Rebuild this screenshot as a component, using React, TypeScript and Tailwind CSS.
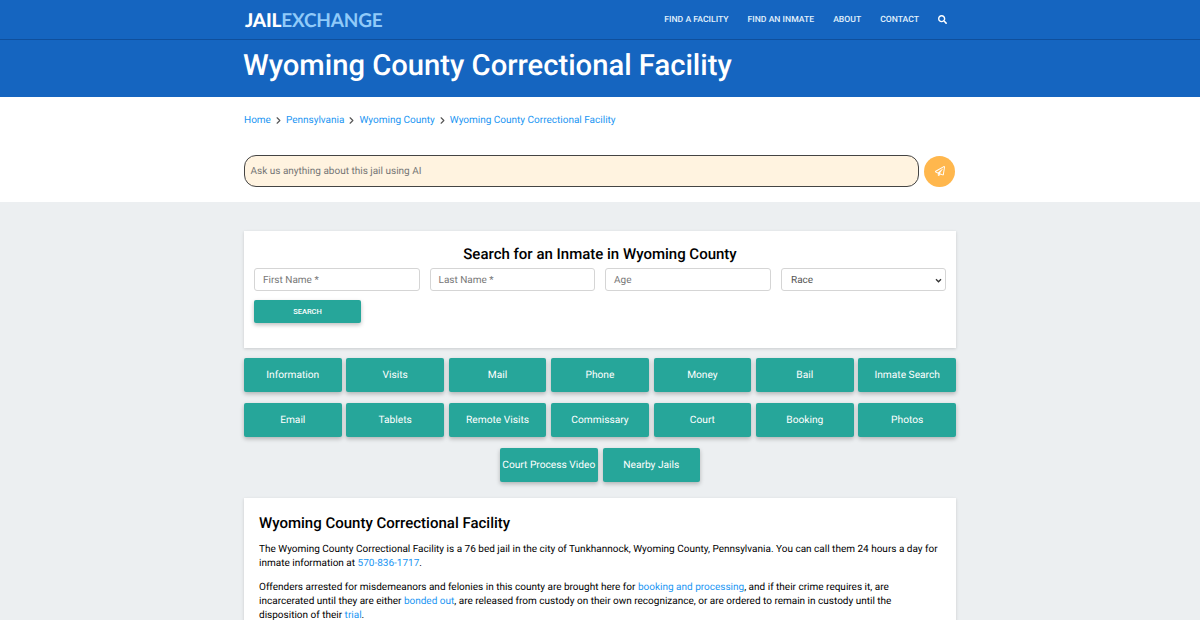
import React from 'react';
import { ChevronRight } from 'lucide-react';
import { FaSearch, FaRegPaperPlane } from 'react-icons/fa';

const navLinks = ['FIND A FACILITY', 'FIND AN INMATE', 'ABOUT', 'CONTACT'];
const crumbs = ['Home', 'Pennsylvania', 'Wyoming County', 'Wyoming County Correctional Facility'];
const rows = [
  ['Information', 'Visits', 'Mail', 'Phone', 'Money', 'Bail', 'Inmate Search'],
  ['Email', 'Tablets', 'Remote Visits', 'Commissary', 'Court', 'Booking', 'Photos'],
];

const TealButton = ({ label }: { label: string }) => (
  <a className="flex h-[34px] w-[97.5px] shrink-0 items-center justify-center whitespace-nowrap rounded-[2px] bg-[#26a69a] pt-px text-[10.2px] text-white shadow-[0_2px_4px_rgba(0,0,0,0.25)]">
    {label}
  </a>
);

const Field = ({ placeholder }: { placeholder: string }) => (
  <div className="flex h-[23px] w-[165.5px] items-center rounded-[3px] border border-[#d5d5d5] bg-white px-2 pt-px text-[10px] text-[#777]">
    {placeholder}
  </div>
);

export default function App() {
  return (
    <div className="h-screen w-full overflow-hidden bg-[#eceff1] font-['Roboto',sans-serif] [text-rendering:geometricPrecision]">
      {/* Header */}
      <header className="h-[97px] bg-[#1565c0] shadow-[0_1px_2px_rgba(0,0,0,0.2)]">
        <div className="h-[40px] border-b border-[#0f4f9c]">
          <div className="mx-auto flex h-full w-[712px] items-center justify-between">
            <a className="ml-px pt-[2px] font-['Lato',sans-serif] text-[19px] font-bold leading-none tracking-[-0.2px]">
              <span className="font-black text-white">JAIL</span>
              <span className="text-[#90caf9]">EXCHANGE</span>
            </a>
            <nav className="mr-[9px] flex items-center gap-[19px] pt-[1px] text-[8.65px] font-medium text-[#e3f2fd]">
              {navLinks.map((l) => (
                <a key={l}>{l}</a>
              ))}
              <FaSearch size={9} className="text-white" />
            </nav>
          </div>
        </div>
        <h1 className="mx-auto -translate-x-px w-[712px] pt-[8px] text-[29.2px] font-medium leading-[36px] text-white">
          Wyoming County Correctional Facility
        </h1>
      </header>

      {/* Breadcrumbs and AI box */}
      <section className="h-[105px] bg-white">
        <div className="mx-auto w-[712px]">
          <div className="flex h-[45px] items-center pt-px text-[10px] text-[#2196f3]">
            {crumbs.map((c, i) => (
              <React.Fragment key={c}>
                {i > 0 && <ChevronRight size={11} strokeWidth={2.5} className="mx-[2px] text-[#555]" />}
                <a>{c}</a>
              </React.Fragment>
            ))}
          </div>
          <div className="mt-[13px] flex items-center justify-between">
            <div className="flex h-[32px] w-[675px] items-center rounded-[12px] border border-[#444] bg-[#fff3e0] px-[5.5px] text-[10px] text-[#757575]">
              Ask us anything about this jail using AI
            </div>
            <button className="mr-px flex h-[31px] w-[31px] items-center justify-center rounded-full bg-[#ffb74d]">
              <FaRegPaperPlane size={10} className="text-white" />
            </button>
          </div>
        </div>
      </section>

      <main className="mx-auto w-[712px] pt-[29px]">
        {/* Inmate search */}
        <section className="h-[117px] bg-white px-[10px] pt-[14px] shadow-[0_1px_3px_rgba(0,0,0,0.15)]">
          <h2 className="text-center text-[15px] font-medium leading-[18px] text-black">
            Search for an Inmate in Wyoming County
          </h2>
          <div className="mt-[5px] flex justify-between">
            <Field placeholder="First Name *" />
            <Field placeholder="Last Name *" />
            <Field placeholder="Age" />
            <div className="flex h-[23px] w-[165.5px] items-center justify-between rounded-[3px] border border-[#d5d5d5] bg-white pl-[9.5px] pr-[3px] pt-px text-[10px] text-[#555]">
              Race
              <svg width="7" height="5" viewBox="0 0 8 6" fill="none" stroke="#333" strokeWidth="1.6">
                <path d="M1 1.5 4 4.5 7 1.5" />
              </svg>
            </div>
          </div>
          <button className="mt-[9px] block h-[23px] w-[107px] rounded-[2px] bg-[#26a69a] pt-px text-[7.5px] font-medium text-white shadow-[0_2px_4px_rgba(0,0,0,0.25)]">
            SEARCH
          </button>
        </section>

        {/* Topic buttons */}
        <div className="mt-[10px] flex flex-col gap-[11px]">
          {rows.map((row) => (
            <div key={row[0]} className="flex justify-between">
              {row.map((b) => (
                <TealButton key={b} label={b} />
              ))}
            </div>
          ))}
          <div className="flex justify-center gap-[5px]">
            <TealButton label="Court Process Video" />
            <TealButton label="Nearby Jails" />
          </div>
        </div>

        {/* Article */}
        <article className="mt-[16px] bg-white px-[15px] pb-[20px] pt-[16px] text-[10px] leading-[14px] text-black shadow-[0_1px_3px_rgba(0,0,0,0.15)]">
          <h2 className="text-[15px] font-medium leading-[18px]">Wyoming County Correctional Facility</h2>
          <p className="mt-[11px]">
            The Wyoming County Correctional Facility is a 76 bed jail in the city of Tunkhannock, Wyoming County,
            Pennsylvania. You can call them 24 hours a day for inmate information at{' '}
            <a className="text-[#2196f3]">570-836-1717</a>.
          </p>
          <p className="mt-[10px]">
            Offenders arrested for misdemeanors and felonies in this county are brought here for{' '}
            <a className="text-[#2196f3]">booking and processing</a>, and if their crime requires it, are incarcerated
            until they are either <a className="text-[#2196f3]">bonded out</a>, are released from custody on their own
            recognizance, or are ordered to remain in custody until the disposition of their{' '}
            <a className="text-[#2196f3]">trial</a>.
          </p>
        </article>
      </main>
    </div>
  );
}
